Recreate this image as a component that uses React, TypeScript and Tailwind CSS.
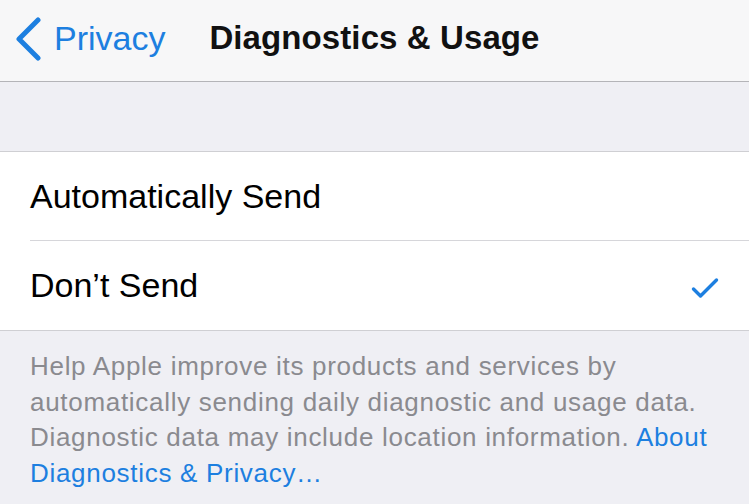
import { useState } from 'react';

const BLUE = 'text-[#1d7fe0]';

function Chevron() {
  return (
    <svg width="28" height="44" viewBox="0 0 28 44" className="shrink-0">
      <path d="M24 3 L5 22 L24 41" fill="none" stroke="#1d7fe0" strokeWidth="5" strokeLinecap="round" strokeLinejoin="round" />
    </svg>
  );
}

function Check() {
  return (
    <svg width="28" height="22" viewBox="0 0 28 22" className="mt-[4px]">
      <path d="M2.5 12 L9.5 19 L25.5 3" fill="none" stroke="#1d7fe0" strokeWidth="3.4" strokeLinecap="round" strokeLinejoin="round" />
    </svg>
  );
}

export default function App() {
  const [choice, setChoice] = useState<'auto' | 'none'>('none');

  const options = [
    { id: 'auto' as const, label: 'Automatically Send' },
    { id: 'none' as const, label: 'Don\u2019t Send' },
  ];

  return (
    <div className="w-[749px] h-[504px] overflow-hidden bg-[#efeff4] font-['Liberation_Sans',Arial,sans-serif]">
      {/* Nav bar */}
      <div className="h-[82px] bg-[#f7f7f8] border-b border-[#b4b4b8] grid grid-cols-[1fr_auto_1fr] items-center">
        <button className="flex items-center gap-[12px] pl-[14px] pb-[4px]">
          <Chevron />
          <span className={`text-[34px] ${BLUE}`}>Privacy</span>
        </button>
        <h1 className="text-[33px] font-bold text-[#111] tracking-[0.1px] pb-[6px]">Diagnostics &amp; Usage</h1>
        <div />
      </div>

      {/* Spacer band */}
      <div className="h-[70px] border-b border-[#cfcfd3]" />

      {/* Options */}
      <div className="bg-white border-b border-[#cfcfd3]">
        {options.map((o, i) => (
          <button
            key={o.id}
            onClick={() => setChoice(o.id)}
            className="w-full flex pl-[30px] text-left"
          >
            <div
              className={`flex-1 flex items-center justify-between pr-[30px] h-[89px] ${
                i < options.length - 1 ? 'border-b border-[#d6d6da]' : ''
              }`}
            >
              <span className="text-[34px] text-black">{o.label}</span>
              {choice === o.id && <Check />}
            </div>
          </button>
        ))}
      </div>

      {/* Footer */}
      <p className="pl-[30px] pt-[18px] text-[26px] leading-[35.5px] tracking-[0.7px] text-[#8a8a8f]">
        Help Apple improve its products and services by
        <br />
        automatically sending daily diagnostic and usage data.
        <br />
        Diagnostic data may include location information.{' '}
        <span className={BLUE}>About</span>
        <br />
        <span className={BLUE}>Diagnostics &amp; Privacy…</span>
      </p>
    </div>
  );
}
